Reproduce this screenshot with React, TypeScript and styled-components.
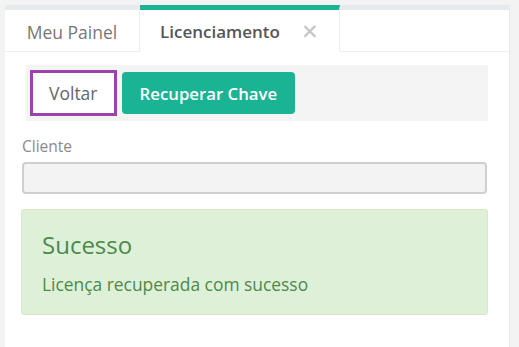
import styled, { createGlobalStyle } from "styled-components";

const Global = createGlobalStyle`
html, body {
    margin: 0;
    padding: 0;
    background: #f3f3f4;
}
body {
    font-family: "Open Sans", "Liberation Sans", sans-serif;
}
`

const Page = styled.div`
width: 519px;
height: 347px;
box-sizing: border-box;
padding: 5px 9px 0 5px;
overflow: hidden;
`

const Panel = styled.div`
height: 100%;
display: flex;
flex-direction: column;
border-right: 1px solid #e7eaec;
`

const TabBar = styled.div`
display: flex;
height: 47px;
flex: 0 0 auto;
`

const Tab = styled.div<{ $active?: boolean; $width: number }>`
box-sizing: border-box;
width: ${p => p.$width}px;
flex: 0 0 auto;
display: flex;
align-items: center;
justify-content: ${p => (p.$active ? "flex-start" : "center")};
gap: 21px;
padding: 2px 0 0 ${p => (p.$active ? "20px" : "0")};
background: #fff;
border-top: 5px solid ${p => (p.$active ? "#1ab394" : "#e7eaec")};
border-bottom: 1px solid ${p => (p.$active ? "#fff" : "#eceeef")};
border-right: 1px solid #eceeef;
font-size: ${p => (p.$active ? "17px" : "17.5px")};
font-weight: ${p => (p.$active ? 600 : 400)};
color: ${p => (p.$active ? "#555" : "#777")};
`

const TabFill = styled.div`
flex: 1;
background: #fff;
border-top: 5px solid #e7eaec;
border-bottom: 1px solid #eceeef;
`

const Close = styled.span`
font-size: 21px;
font-weight: 300;
color: #c4c4c4;
line-height: 1;
`

const Content = styled.div`
flex: 1;
background: #fff;
padding: 13px 21px 0 17px;
`

const Toolbar = styled.div`
margin-left: 4px;
height: 56px;
box-sizing: border-box;
background: #f4f4f4;
display: flex;
align-items: center;
gap: 5px;
padding-left: 4px;
`

const Button = styled.button<{ $primary?: boolean }>`
box-sizing: border-box;
font-family: inherit;
cursor: pointer;
border-radius: ${p => (p.$primary ? "4px" : "0")};
height: ${p => (p.$primary ? "42px" : "46px")};
padding: ${p => (p.$primary ? "0 18px" : "0 16px")};
background: ${p => (p.$primary ? "#1ab394" : "#fff")};
color: ${p => (p.$primary ? "#fff" : "#666")};
font-size: ${p => (p.$primary ? "16.8px" : "17.5px")};
font-weight: ${p => (p.$primary ? 600 : 400)};
border: ${p => (p.$primary ? "none" : "3px solid #9c42ab")};
`

const Label = styled.div`
margin-top: 14px;
font-size: 15.5px;
color: #8a8a8a;
`

const Input = styled.div`
margin-top: 5px;
height: 32px;
box-sizing: border-box;
background: #f3f3f3;
border: 2px solid #cfcfcf;
border-radius: 4px;
margin-right: 1px;
`

const Alert = styled.div`
margin-top: 15px;
margin-left: -1px;
height: 106px;
box-sizing: border-box;
padding: 19px 20px;
background: #dff0d8;
border: 1px solid #d6e9c6;
border-radius: 3px;
color: #4a8a4a;
`

const AlertTitle = styled.div`
font-size: 24px;
line-height: 32px;
`

const AlertText = styled.div`
margin-top: 12px;
font-size: 17.4px;
line-height: 22px;
`

const App = () => {
    return (
        <Page>
            <Global />
            <Panel>
                <TabBar>
                    <Tab $width={135}>Meu Painel</Tab>
                    <Tab $width={200} $active>
                        Licenciamento
                        <Close>✕</Close>
                    </Tab>
                    <TabFill />
                </TabBar>
                <Content>
                    <Toolbar>
                        <Button>Voltar</Button>
                        <Button $primary>Recuperar Chave</Button>
                    </Toolbar>
                    <Label>Cliente</Label>
                    <Input />
                    <Alert>
                        <AlertTitle>Sucesso</AlertTitle>
                        <AlertText>Licença recuperada com sucesso</AlertText>
                    </Alert>
                </Content>
            </Panel>
        </Page>
    )
}

export default App;
